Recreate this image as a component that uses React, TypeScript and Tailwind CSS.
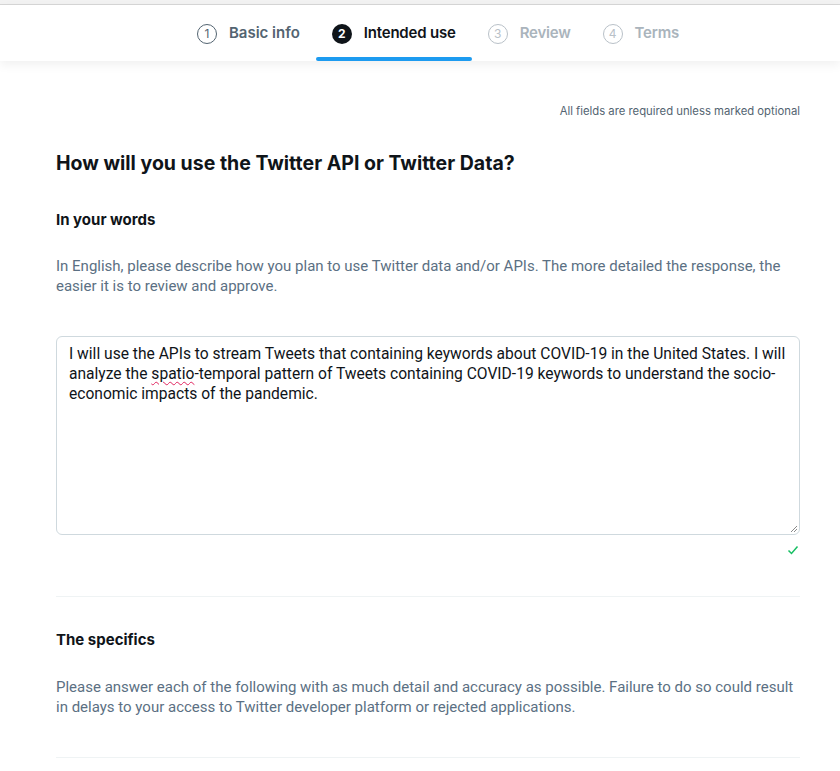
const tabs = [
  { n: "1", label: "Basic info", state: "done" },
  { n: "2", label: "Intended use", state: "active" },
  { n: "3", label: "Review", state: "todo" },
  { n: "4", label: "Terms", state: "todo" },
];

function Step({ n, label, state }: { n: string; label: string; state: string }) {
  const active = state === "active";
  const done = state === "done";
  return (
    <div className="relative flex items-center gap-3 px-4 h-full">
      <span
        className={
          active
            ? "w-5 h-5 rounded-full bg-[#0f1419] text-white text-[12px] font-bold flex items-center justify-center"
            : done
            ? "w-5 h-5 rounded-full border border-[#536471] text-[#536471] text-[12px] flex items-center justify-center"
            : "w-5 h-5 rounded-full border border-[#b9c1c8] text-[#b9c1c8] text-[12px] flex items-center justify-center"
        }
      >
        {n}
      </span>
      <span
        className={
          active
            ? "text-[15px] font-semibold tracking-[-0.2px] text-[#0f1419]"
            : done
            ? "text-[15px] font-semibold text-[#536471]"
            : "text-[15px] font-semibold tracking-[-0.2px] text-[#aab4bc]"
        }
      >
        {label}
      </span>
      {active && <div className="absolute left-0 right-0 bottom-0 h-[4px] rounded-full bg-[#1d9bf0]" />}
    </div>
  );
}

export default function App() {
  return (
    <div className="w-[840px] min-h-[771px] bg-white font-['Inter',sans-serif] overflow-hidden">
      {/* browser strip */}
      <div className="h-[5px] bg-[#f2f2f2] border-b border-[#d6d6d6]" />

      {/* stepper */}
      <div className="h-[56px] bg-white flex justify-center pl-[36px] shadow-[0_4px_10px_rgba(0,0,0,0.06)] relative z-10">
        <div className="flex items-stretch h-full pt-[1px]">
          {tabs.map((t) => (
            <Step key={t.n} {...t} />
          ))}
        </div>
      </div>

      <div className="pl-14 pr-10">
        <p className="text-right text-[11.3px] text-[#536471] mt-[42px] leading-4">
          All fields are required unless marked optional
        </p>

        <h1 className="text-[19.5px] font-bold text-[#0f1419] mt-[32px] leading-6">
          How will you use the Twitter API or Twitter Data?
        </h1>

        <h2 className="text-[15px] font-bold text-[#0f1419] mt-[35px] leading-5">In your words</h2>
        <p className="font-['Roboto',sans-serif] text-[15px] leading-5 text-[#5b7083] mt-[26px]">
          In English, please describe how you plan to use Twitter data and/or APIs. The more detailed the response, the
          easier it is to review and approve.
        </p>

        <div className="mt-[40px] h-[199px] rounded-md border border-[#cfd9de] px-3 pt-[7px] font-['Roboto',sans-serif] text-[15.6px] leading-5 text-[#0f1419] relative">
          I will use the APIs to stream Tweets that containing keywords about COVID-19 in the United States. I will
          analyze the <span className="underline decoration-wavy decoration-[#e0245e] decoration-1 underline-offset-2">spatio</span>-temporal pattern of Tweets containing COVID-19 keywords to understand the socio-economic impacts of the
          pandemic.
          <svg className="absolute right-[1px] bottom-[1px]" width="9" height="9" viewBox="0 0 9 9">
            <path d="M8 2 L2 8 M8 5 L5 8" stroke="#8a8a8a" strokeWidth="1" />
          </svg>
        </div>

        <div className="flex justify-end mt-[10px] pr-[1px]">
          <svg width="12" height="10" viewBox="0 0 12 10">
            <path d="M1.5 5.5 L4.5 8.5 L10.5 1.5" stroke="#17bf63" strokeWidth="1.5" fill="none" />
          </svg>
        </div>

        <div className="border-t border-[#eff3f4] mt-[41px]" />

        <h2 className="text-[15px] font-bold text-[#0f1419] mt-[33px] leading-5">The specifics</h2>
        <p className="font-['Roboto',sans-serif] text-[15px] leading-5 text-[#5b7083] mt-[27px]">
          Please answer each of the following with as much detail and accuracy as possible. Failure to do so could result
          in delays to your access to Twitter developer platform or rejected applications.
        </p>

        <div className="border-t border-[#eff3f4] mt-[40px]" />
      </div>
    </div>
  );
}
